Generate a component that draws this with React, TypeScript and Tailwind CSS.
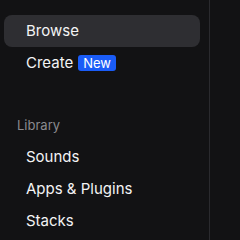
import React from "react";

export default function App() {
  const font = { fontFamily: "Inter, 'Noto Sans', sans-serif" };
  return (
    <div className="w-[240px] h-[240px] bg-[#121214] flex overflow-hidden" style={font}>
      <div className="w-[209px] shrink-0 flex flex-col pt-[15px] pl-[4px] pr-[9px]">
        <div className="h-8 rounded-lg bg-[#2e2e32] flex items-center pl-[22px] text-[15px] text-[#f4f4f5]">Browse</div>
        <div className="h-8 flex items-center pl-[22px] text-[15px] text-[#f4f4f5] gap-[5px]">
          <span>Create</span>
          <span className="h-4 px-[5px] rounded-[3px] bg-[#1a5cf7] text-white text-[13px] leading-4 flex items-center">New</span>
        </div>
        <div className="mt-[37px] h-5 flex items-center pl-[13px] text-[13px] text-[#8a8a8f]">Library</div>
        <div className="mt-[5px] h-8 flex items-center pl-[22px] text-[15px] text-[#f4f4f5]">Sounds</div>
        <div className="h-8 flex items-center pl-[22px] text-[15px] text-[#f4f4f5]">Apps &amp; Plugins</div>
        <div className="h-8 flex items-center pl-[22px] text-[15px] text-[#f4f4f5]">Stacks</div>
      </div>
      <div className="w-px bg-[#2a2a2e]" />
      <div className="flex-1 bg-[#121214]" />
    </div>
  );
}
